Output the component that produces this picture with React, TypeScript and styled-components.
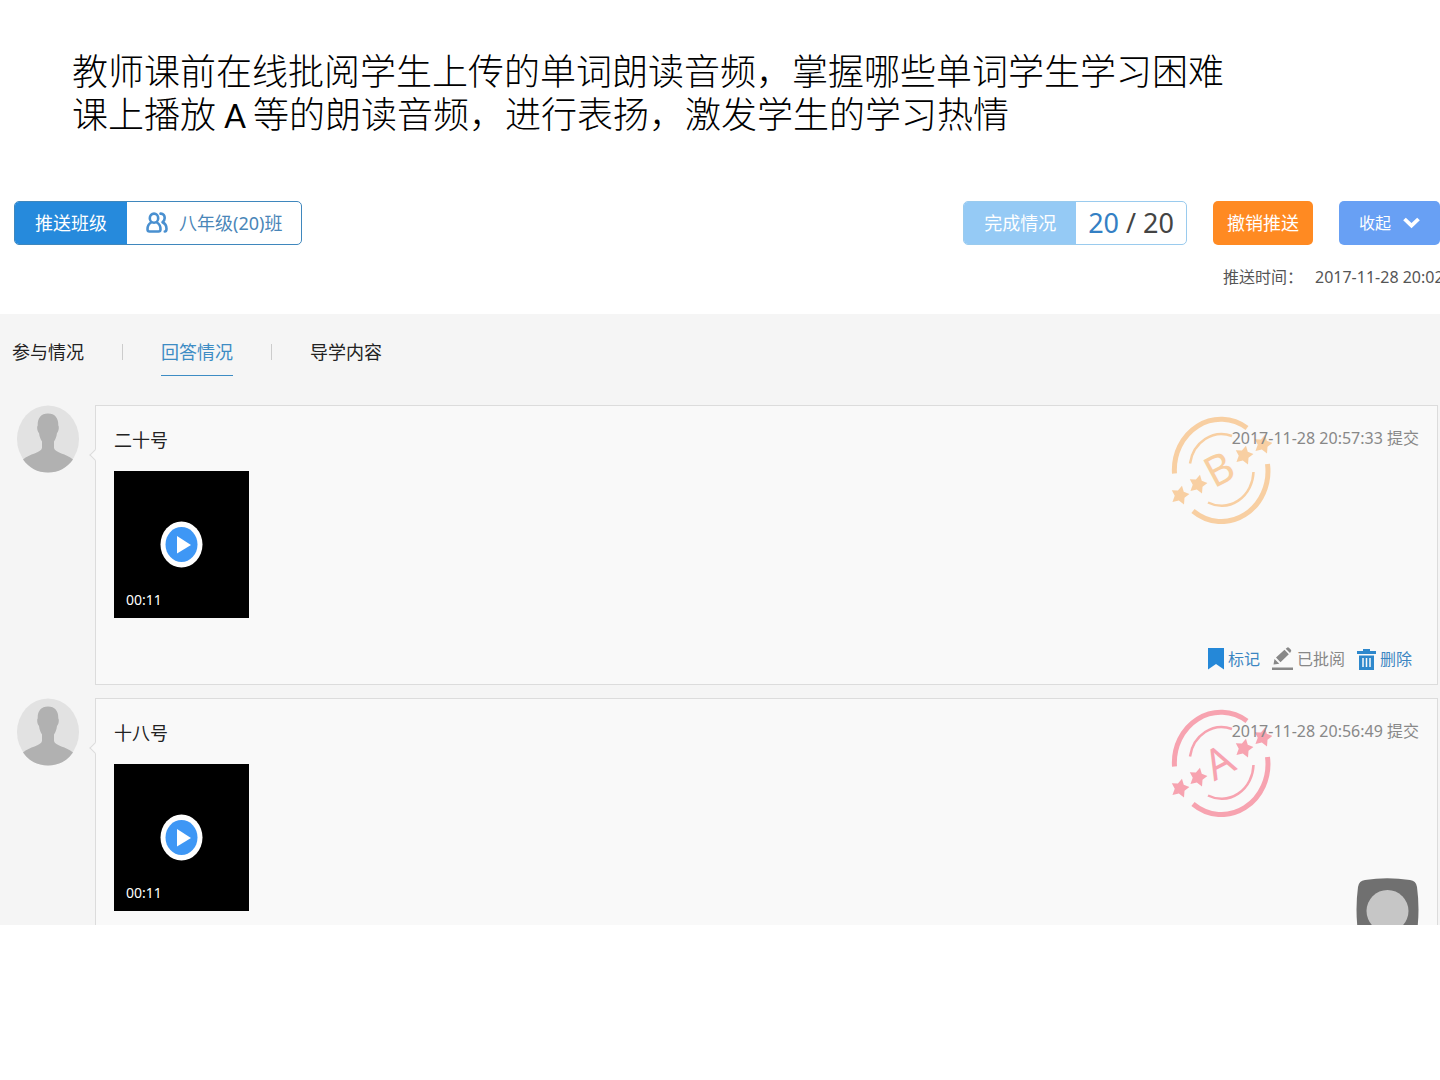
import React from 'react';
import styled, { createGlobalStyle } from 'styled-components';

const GlobalStyle = createGlobalStyle`
  * { box-sizing: border-box; }
  body {
    margin: 0;
    background: #fff;
    color: #333;
    font-family: "Noto Sans", "Noto Sans CJK SC", sans-serif;
    font-size: 18px;
    line-height: 24px;
  }
  h1, h2, p, ul { margin: 0; padding: 0; font-weight: 400; }
  ul { list-style: none; }
  button { border: 0; padding: 0; background: none; font: inherit; color: inherit; cursor: pointer; }
  svg { display: block; flex: none; }
`;

const Page = styled.main`
  overflow: hidden;
`;

const Title = styled.h1`
  padding: 50px 72px 0;
  font-family: Lato, "Noto Sans CJK SC", sans-serif;
  font-size: 36px;
  font-weight: 300;
  line-height: 43px;
  color: #000;
`;

const Latin = styled.span`
  font-family: Lato, sans-serif;
  font-size: 32px;
  font-weight: 400;
`;

const Toolbar = styled.div`
  display: flex;
  align-items: center;
  gap: 26px;
  padding: 64px 0 0 14px;
`;

const Group = styled.div<{ $line: string }>`
  display: flex;
  height: 44px;
  border: 1px solid ${(p) => p.$line};
  border-radius: 5px;
  overflow: hidden;
  background: #fff;
`;

const GroupLabel = styled.span<{ $fill: string }>`
  display: flex;
  align-items: center;
  padding: 0 20px;
  background: ${(p) => p.$fill};
  color: #fff;
`;

const ClassLink = styled.a`
  display: flex;
  align-items: center;
  gap: 11px;
  padding: 0 19px;
  color: #4a86b8;
  text-decoration: none;
`;

const Count = styled.span`
  display: flex;
  align-items: center;
  gap: 7px;
  padding: 0 12px;
  font-size: 27px;
  color: #444;
`;

const CountDone = styled.span`
  color: #3480c4;
`;

const Spacer = styled.div`
  flex: 1;
`;

const SolidButton = styled.button<{ $fill: string; $small?: boolean }>`
  display: flex;
  align-items: center;
  gap: 12px;
  height: 44px;
  padding: 0 ${(p) => (p.$small ? 20 : 14)}px;
  border-radius: 5px;
  background: ${(p) => p.$fill};
  color: #fff;
  font-size: ${(p) => (p.$small ? 16 : 18)}px;
`;

const PushTime = styled.p`
  display: flex;
  gap: 12px;
  width: 217px;
  margin-left: auto;
  padding: 20px 0 25px;
  font-size: 16px;
  color: #555;
  white-space: nowrap;
`;

const Answers = styled.section`
  position: relative;
  height: 611px;
  overflow: hidden;
  background: #f5f5f5;
`;

const Tabs = styled.nav`
  display: flex;
  align-items: flex-start;
  gap: 38px;
  padding: 26px 12px 29px;
`;

const Tab = styled.a<{ $active?: boolean }>`
  padding-bottom: 11px;
  border-bottom: 1px solid ${(p) => (p.$active ? '#3d8cc4' : 'transparent')};
  color: ${(p) => (p.$active ? '#3d8cc4' : '#222')};
  text-decoration: none;
`;

const TabRule = styled.span`
  width: 1px;
  height: 16px;
  margin-top: 4px;
  background: #ccc;
`;

const Feed = styled.ul`
  display: flex;
  flex-direction: column;
  gap: 13px;
  padding: 0 2px 0 17px;
`;

const Entry = styled.li`
  display: grid;
  grid-template-columns: 62px minmax(0, 1fr);
  gap: 16px;
`;

const Card = styled.article`
  position: relative;
  min-height: 280px;
  padding: 22px 18px 13px;
  border: 1px solid #dcdcdc;
  background: #f9f9f9;
`;

const Pointer = styled.span`
  position: absolute;
  left: -5px;
  top: 45px;
  width: 8px;
  height: 8px;
  border: solid #dcdcdc;
  border-width: 0 0 1px 1px;
  background: #f9f9f9;
  transform: rotate(45deg);
`;

const CardHead = styled.header`
  display: flex;
  justify-content: space-between;
  margin-bottom: 19px;
`;

const Student = styled.h2`
  font-size: 18px;
  color: #222;
`;

const Submitted = styled.p`
  position: relative;
  z-index: 1;
  font-size: 16px;
  line-height: 20px;
  color: #888;
`;

const StampBox = styled.div`
  position: absolute;
  top: 10px;
  right: 165px;
`;

const StampLetter = styled.text`
  font-family: "Noto Sans", sans-serif;
  font-size: 42px;
  font-weight: 400;
`;

const Recording = styled.button`
  position: relative;
  display: flex;
  align-items: center;
  justify-content: center;
  width: 135px;
  height: 147px;
  background: #000;
`;

const Duration = styled.span`
  position: absolute;
  left: 12px;
  bottom: 8px;
  font-size: 14px;
  line-height: 20px;
  color: #fff;
`;

const Actions = styled.footer`
  display: flex;
  justify-content: flex-end;
  gap: 12px;
  padding: 29px 7px 0 0;
`;

const Action = styled.button<{ $muted?: boolean }>`
  display: flex;
  align-items: center;
  gap: 4px;
  height: 24px;
  font-size: 16px;
  color: ${(p) => (p.$muted ? '#888' : '#3c86c2')};
`;

const Assist = styled.button`
  position: absolute;
  right: 21px;
  bottom: -16px;
`;

function PeopleIcon() {
  return (
    <svg width="22" height="22" viewBox="0 0 22 22" fill="none" stroke="#4a90d0" strokeWidth="2.600" strokeLinejoin="round" strokeLinecap="round">
      <ellipse cx="8" cy="6.200" rx="4.200" ry="4.600" />
      <path d="M5 10.500C2.500 12 1.500 13.600 1.500 17.200c0 1.600.6 2.300 2 2.300h9c1.400 0 2-.7 2-2.300 0-3.600-1-5.200-3.500-6.700" />
      <path d="M14.500 1.600c2.900-.2 4.200 1.900 4.200 4.400 0 2.100-.9 3.300-2.200 4.300 3.200 1.500 4 3.300 4 6.500 0 1.900-.6 2.700-1.700 2.700" />
    </svg>
  );
}

function ChevronIcon() {
  return (
    <svg width="17" height="12" viewBox="0 0 17 12" fill="none" stroke="#fff" strokeWidth="3.800">
      <path d="M1.500 2 8.500 8.700 15.500 2" />
    </svg>
  );
}

function Avatar() {
  return (
    <svg width="62" height="68" viewBox="0 0 62 68" role="img" aria-label="头像">
      <ellipse cx="31" cy="34" rx="31" ry="33.500" fill="#e2e2e2" />
      <path
        d="M31 8.500c-7 0-10.500 4.500-10.300 12-.9.700-.7 5.500 1.300 7.500.5 4 1.500 6 3 8.500v6.500c-1 5-12.500 5.500-19 11.500C12 63 20.500 67.500 31 67.500S50 63 56 54.500c-6.500-6-18-6.500-19-11.500v-6.500c1.500-2.500 2.500-4.500 3-8.500 2-2 2.200-6.800 1.300-7.500.2-7.500-3.300-12-10.300-12z"
        fill="#b1b1b1"
      />
    </svg>
  );
}

const STAR = 'M0-9.500 3-4 9-3 5 1.800 5.900 8.500 0 5.600-5.900 8.500-5 1.800-9-3-3-4z';
const STAR_SPOTS = [[9, 79], [27, 68], [73, 39], [92, 28]];

function Stamp({ grade, color }: { grade: string; color: string }) {
  return (
    <StampBox>
      <svg width="101" height="108" viewBox="0 0 101 108" fill="none" stroke={color}>
        <path d="M3.500 57.500A46.500 50.500 0 0 1 76 12M96.500 48A46.500 50.500 0 0 1 22 95" strokeWidth="5" />
        <path d="M19 47.500A32 35 0 0 1 61 20M82.500 56A32 35 0 0 1 37 86.500" strokeWidth="2.500" />
        {STAR_SPOTS.map(([x, y]) => (
          <path key={x} d={STAR} transform={`translate(${x} ${y}) rotate(12)`} fill={color} stroke="none" />
        ))}
        <StampLetter transform="translate(48 53) rotate(-28)" y="15" textAnchor="middle" fill={color} stroke="none">
          {grade}
        </StampLetter>
      </svg>
    </StampBox>
  );
}

function PlayIcon() {
  return (
    <svg width="43" height="47" viewBox="0 0 43 47">
      <ellipse cx="21.500" cy="23.500" rx="21" ry="23" fill="#fff" />
      <ellipse cx="21.500" cy="23.500" rx="16" ry="17.500" fill="#3e97f5" />
      <path d="M17 15v17.500L31 24z" fill="#fff" />
    </svg>
  );
}

function BookmarkIcon() {
  return (
    <svg width="16" height="22" viewBox="0 0 16 22">
      <path d="M0 0h16v21.500L8 16l-8 5.500z" fill="#2588d8" />
    </svg>
  );
}

function PenIcon() {
  return (
    <svg width="21" height="24" viewBox="0 0 21 24" fill="#888">
      <path d="M0 20.500h21V23H0zM1.500 17.500l1-5.500 4.800 4.700zM4 10.500l8.500-7.700 4.300 4.400-8.300 8zM13.700 1.800 15 .7q1-.8 2.200.2l1.500 1.500q1 1.200.2 2.200L18 6z" />
    </svg>
  );
}

function TrashIcon() {
  return (
    <svg width="19" height="21" viewBox="0 0 19 21">
      <path d="M6 0h7v2h6v3H0V2h6zM2 6.500h15V21H2z" fill="#2e88cc" />
      <path d="M6 9v9M9.500 9v9M13 9v9" stroke="#f9f9f9" strokeWidth="1.500" />
    </svg>
  );
}

type Answer = { student: string; time: string; grade: string; color: string; editable?: boolean };

const ANSWERS: Answer[] = [
  { student: '二十号', time: '2017-11-28 20:57:33', grade: 'B', color: '#f8cfa2', editable: true },
  { student: '十八号', time: '2017-11-28 20:56:49', grade: 'A', color: '#f7a3b0' },
];

function AnswerEntry({ student, time, grade, color, editable }: Answer) {
  return (
    <Entry>
      <Avatar />
      <Card>
        <Pointer />
        <Stamp grade={grade} color={color} />
        <CardHead>
          <Student>{student}</Student>
          <Submitted>{time} 提交</Submitted>
        </CardHead>
        <Recording aria-label="播放">
          <PlayIcon />
          <Duration>00:11</Duration>
        </Recording>
        {editable && (
          <Actions>
            <Action><BookmarkIcon />标记</Action>
            <Action $muted><PenIcon />已批阅</Action>
            <Action><TrashIcon />删除</Action>
          </Actions>
        )}
      </Card>
    </Entry>
  );
}

export default function App() {
  return (
    <Page>
      <GlobalStyle />
      <Title lang="zh-CN">
        教师课前在线批阅学生上传的单词朗读音频，掌握哪些单词学生学习困难
        <br />
        课上播放<Latin> A </Latin>等的朗读音频，进行表扬，激发学生的学习热情
      </Title>
      <Toolbar>
        <Group $line="#3f87bd">
          <GroupLabel $fill="#268adc">推送班级</GroupLabel>
          <ClassLink href="#class"><PeopleIcon />八年级(20)班</ClassLink>
        </Group>
        <Spacer />
        <Group $line="#9acbee">
          <GroupLabel $fill="#95caf5">完成情况</GroupLabel>
          <Count><CountDone>20</CountDone><span>/</span><span>20</span></Count>
        </Group>
        <SolidButton $fill="#ff8a22">撤销推送</SolidButton>
        <SolidButton $fill="#68a0f4" $small>收起<ChevronIcon /></SolidButton>
      </Toolbar>
      <PushTime><span>推送时间：</span><span>2017-11-28 20:02</span></PushTime>
      <Answers>
        <Tabs>
          <Tab href="#members">参与情况</Tab>
          <TabRule />
          <Tab href="#answers" $active>回答情况</Tab>
          <TabRule />
          <Tab href="#content">导学内容</Tab>
        </Tabs>
        <Feed>
          {ANSWERS.map((answer) => <AnswerEntry key={answer.student} {...answer} />)}
        </Feed>
        <Assist aria-label="辅助">
          <svg width="63" height="63" viewBox="0 0 63 63">
            <path d="M9 2Q31-1.500 54 2q6 .5 7 7 3 22.500 0 45-1 6-7 7-22.500 3-45 0-6-1-7-7-3-22.500 0-45 1-6.500 7-7z" fill="#707070" />
            <circle cx="31.500" cy="33" r="21" fill="#c6c6c6" />
          </svg>
        </Assist>
      </Answers>
    </Page>
  );
}
